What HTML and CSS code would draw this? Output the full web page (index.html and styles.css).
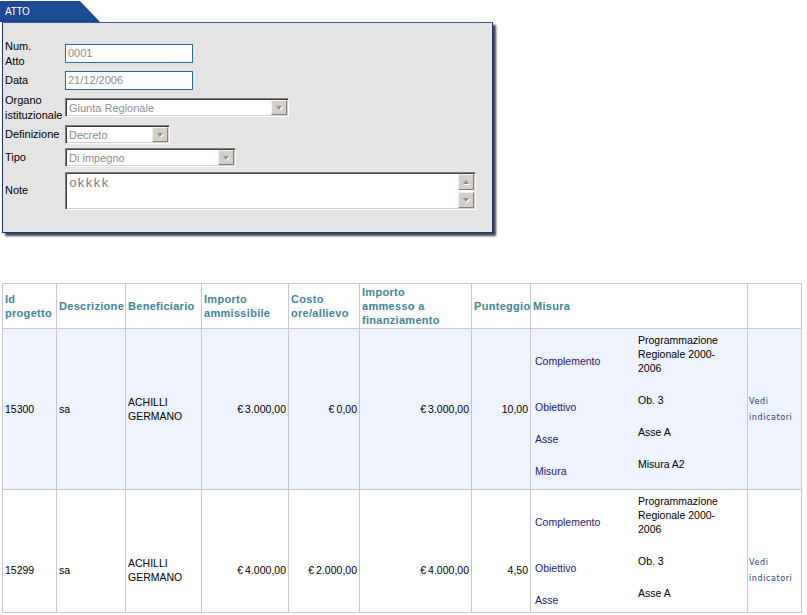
FILE: index.html
```html
<!DOCTYPE html>
<html lang="it">
<head>
<meta charset="utf-8">
<title>Atto</title>
<link rel="stylesheet" href="styles.css">
</head>
<body>
<div class="atto">
  <div class="tab">ATTO</div>
  <div class="panel">
    <div class="frow">
      <div class="flabel">Num.<br>Atto</div>
      <div class="input w128">0001</div>
    </div>
    <div class="frow">
      <div class="flabel">Data</div>
      <div class="input w128">21/12/2006</div>
    </div>
    <div class="frow">
      <div class="flabel">Organo istituzionale</div>
      <div class="select w224"><span>Giunta Regionale</span><span class="arrow"></span></div>
    </div>
    <div class="frow">
      <div class="flabel">Definizione</div>
      <div class="select w105"><span>Decreto</span><span class="arrow"></span></div>
    </div>
    <div class="frow">
      <div class="flabel">Tipo</div>
      <div class="select w171"><span>Di impegno</span><span class="arrow"></span></div>
    </div>
    <div class="frow">
      <div class="flabel">Note</div>
      <div class="note">
        <span class="note-text">okkkk</span>
        <span class="scroll"><span class="sbtn up"></span><span class="sbtn down"></span></span>
      </div>
    </div>
  </div>
</div>

<div class="table-wrap">
<table class="grid">
  <colgroup>
    <col class="c1"><col class="c2"><col class="c3"><col class="c4"><col class="c5"><col class="c6"><col class="c7"><col class="c8"><col class="c9">
  </colgroup>
  <thead>
    <tr>
      <th>Id<br>progetto</th>
      <th>Descrizione</th>
      <th>Beneficiario</th>
      <th>Importo<br>ammissibile</th>
      <th>Costo<br>ore/allievo</th>
      <th>Importo<br>ammesso a<br>finanziamento</th>
      <th>Punteggio</th>
      <th>Misura</th>
      <th></th>
    </tr>
  </thead>
  <tbody>
    <tr class="row-a">
      <td>15300</td>
      <td>sa</td>
      <td>ACHILLI GERMANO</td>
      <td class="num">€&#8201;3.000,00</td>
      <td class="num">€&#8201;0,00</td>
      <td class="num">€&#8201;3.000,00</td>
      <td class="num">10,00</td>
      <td class="mis">
        <table class="misura">
          <tr><td class="k">Complemento</td><td class="v">Programmazione Regionale 2000-2006</td></tr>
          <tr><td class="k">Obiettivo</td><td class="v">Ob. 3</td></tr>
          <tr><td class="k">Asse</td><td class="v">Asse A</td></tr>
          <tr><td class="k">Misura</td><td class="v">Misura A2</td></tr>
        </table>
      </td>
      <td class="lnk"><a class="link">Vedi indicatori</a></td>
    </tr>
    <tr class="row-b">
      <td>15299</td>
      <td>sa</td>
      <td>ACHILLI GERMANO</td>
      <td class="num">€&#8201;4.000,00</td>
      <td class="num">€&#8201;2.000,00</td>
      <td class="num">€&#8201;4.000,00</td>
      <td class="num">4,50</td>
      <td class="mis">
        <table class="misura">
          <tr><td class="k">Complemento</td><td class="v">Programmazione Regionale 2000-2006</td></tr>
          <tr><td class="k">Obiettivo</td><td class="v">Ob. 3</td></tr>
          <tr><td class="k">Asse</td><td class="v">Asse A</td></tr>
          <tr><td class="k">Misura</td><td class="v">Misura A2</td></tr>
        </table>
      </td>
      <td class="lnk"><a class="link">Vedi indicatori</a></td>
    </tr>
  </tbody>
</table>
</div>
</body>
</html>
```
FILE: styles.css
```css
* { box-sizing: border-box; }

body {
  margin: 0;
  font-family: "Liberation Sans", Arial, sans-serif;
  color: #000;
  background: #fff;
}

/* ---------- ATTO panel ---------- */
.atto { width: 500px; }

.tab {
  width: 100px;
  height: 21px;
  margin-top: 1px;
  background: #1e4a94;
  clip-path: polygon(0 0, 80px 0, 100px 100%, 0 100%);
  color: #fff;
  font-size: 10px;
  line-height: 21px;
  padding-left: 5px;
  letter-spacing: -0.3px;
}

.panel {
  margin-left: 2px;
  width: 491px;
  height: 211px;
  background: #e4e4e4;
  border: 1px solid #1f3566;
  border-top-color: #3a5a96;
  box-shadow: 3px 3px 2px rgba(20, 20, 35, 0.8), inset 0 -3px 0 #dde5f1;
  padding: 15px 0 0 2px;
}

.frow {
  display: flex;
  align-items: center;
  min-height: 23px;
  padding: 1px 0;
}

.flabel {
  width: 60px;
  flex: none;
  font-size: 11px;
  line-height: 14.5px;
}

.input {
  height: 19px;
  border: 1px solid #2d6a8b;
  background: #fff;
  color: #8c8c8c;
  font-size: 11px;
  line-height: 17px;
  padding-left: 2px;
}

.w128 { width: 128px; }
.w224 { width: 224px; }
.w105 { width: 105px; }
.w171 { width: 171px; }

.select {
  display: flex;
  justify-content: space-between;
  align-items: center;
  height: 19px;
  border: 1px solid;
  border-color: #808080 #ffffff #ffffff #808080;
  box-shadow: inset 1px 1px 0 #404040, inset -1px -1px 0 #d4d0c8;
  background: #fff;
  color: #8c8c8c;
  font-size: 11px;
  padding: 1px 1px 1px 3px;
}

.arrow {
  width: 16px;
  height: 15px;
  flex: none;
  background: #d4d0c8;
  border: 1px solid;
  border-color: #f0f0f0 #808080 #808080 #f0f0f0;
  display: flex;
  align-items: center;
  justify-content: center;
}

.arrow::before {
  content: "";
  border-left: 3.5px solid transparent;
  border-right: 3.5px solid transparent;
  border-top: 4px solid #8f8f8f;
  filter: drop-shadow(1px 1px 0 #fff);
}

.note {
  width: 411px;
  height: 38px;
  margin-top: 2px;
  display: flex;
  justify-content: space-between;
  border: 1px solid;
  border-color: #808080 #ffffff #ffffff #808080;
  box-shadow: inset 1px 1px 0 #404040, inset -1px -1px 0 #d4d0c8;
  background: #fff;
  padding: 1px;
}

.note-text {
  font-family: "Liberation Mono", "Courier New", monospace;
  font-size: 13.33px;
  color: #808080;
  line-height: 15px;
  padding: 2px 0 0 2px;
}

.scroll {
  width: 16px;
  display: flex;
  flex-direction: column;
  justify-content: space-between;
}

.sbtn {
  height: 16px;
  background: #d4d0c8;
  border: 1px solid;
  border-color: #f0f0f0 #808080 #808080 #f0f0f0;
  display: flex;
  align-items: center;
  justify-content: center;
}

.sbtn.up::before {
  content: "";
  border-left: 3.5px solid transparent;
  border-right: 3.5px solid transparent;
  border-bottom: 4px solid #8f8f8f;
  filter: drop-shadow(1px 1px 0 #fff);
}

.sbtn.down::before {
  content: "";
  border-left: 3.5px solid transparent;
  border-right: 3.5px solid transparent;
  border-top: 4px solid #8f8f8f;
  filter: drop-shadow(1px 1px 0 #fff);
}

/* ---------- Grid ---------- */
.table-wrap {
  margin: 50px 0 0 2px;
  width: 800px;
  height: 330px;
  overflow: hidden;
  border-bottom: 1px solid #c4c4c4;
}

.grid {
  width: 799px;
  border-collapse: collapse;
  table-layout: fixed;
}

.c1 { width: 54px; }
.c2 { width: 69px; }
.c3 { width: 76px; }
.c4 { width: 87px; }
.c5 { width: 71px; }
.c6 { width: 112px; }
.c7 { width: 59px; }
.c8 { width: 217px; }
.c9 { width: 54px; }

.grid th,
.grid td {
  border: 1px solid #c8c8c8;
}

.grid th {
  font-size: 11px;
  font-weight: bold;
  color: #3e8499;
  text-align: left;
  vertical-align: middle;
  padding: 1px 2px;
  line-height: 14px;
  letter-spacing: 0.3px;
  background: #fff;
}

.grid td {
  font-size: 10.5px;
  line-height: 14px;
  padding: 2px;
  vertical-align: middle;
}

.grid td.num { text-align: right; }

.row-a > td { background: #eef3fd; }
.row-b > td { background: #fff; }

.misura {
  width: 100%;
  border-collapse: collapse;
  table-layout: fixed;
}

.grid .misura td {
  border: 0;
  background: transparent;
}

.grid .misura td.k {
  width: 103px;
  color: #1a1a6e;
  vertical-align: middle;
  padding: 2px;
}

.grid .misura td.v {
  vertical-align: top;
  padding: 2px 14px 16px 2px;
}

.grid td.lnk { padding: 2px 1px; }

.link {
  font-family: "DejaVu Sans", Verdana, sans-serif;
  font-size: 8px;
  letter-spacing: 0.6px;
  line-height: 15px;
  color: #23427a;
}
```
